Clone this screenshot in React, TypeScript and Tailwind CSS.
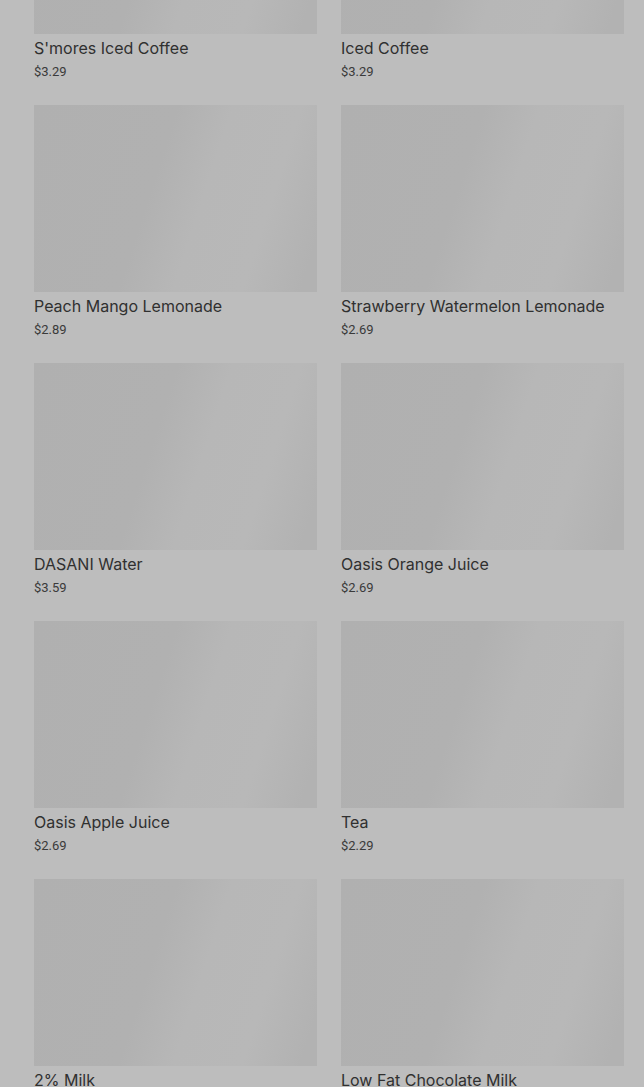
// Menu grid seen through a dimmed overlay (scrolled partway down)
const items = [
  { name: "S'mores Iced Coffee", price: '$3.29' },
  { name: 'Iced Coffee', price: '$3.29' },
  { name: 'Peach Mango Lemonade', price: '$2.89' },
  { name: 'Strawberry Watermelon Lemonade', price: '$2.69' },
  { name: 'DASANI Water', price: '$3.59' },
  { name: 'Oasis Orange Juice', price: '$2.69' },
  { name: 'Oasis Apple Juice', price: '$2.69' },
  { name: 'Tea', price: '$2.29' },
  { name: '2% Milk', price: '$1.99' },
  { name: 'Low Fat Chocolate Milk', price: '$2.19' },
];

function ItemCard({ name, price }: { name: string; price: string }) {
  return (
    <div className="flex flex-col">
      <div className="h-[187px] w-full bg-[linear-gradient(108deg,#b0b0b0_0%,#b1b1b1_42%,#b7b7b7_58%,#b8b8b8_78%,#b2b2b2_95%)]" />
      <div className="mt-[2px] font-['Inter','Roboto',sans-serif] text-[16px] leading-[24px] text-[#303030]">{name}</div>
      <div className="mt-px text-[13px] leading-[21px] text-[#3a3a3a]">{price}</div>
    </div>
  );
}

export default function App() {
  return (
    <div className="h-[1087px] overflow-hidden bg-[#bdbdbd] font-['Roboto','Liberation_Sans',sans-serif]">
      <div className="-mt-[153px] grid grid-cols-2 gap-x-6 gap-y-[23px] pl-[34px] pr-5">
        {items.map((it) => (
          <ItemCard key={it.name} name={it.name} price={it.price} />
        ))}
      </div>
    </div>
  );
}
